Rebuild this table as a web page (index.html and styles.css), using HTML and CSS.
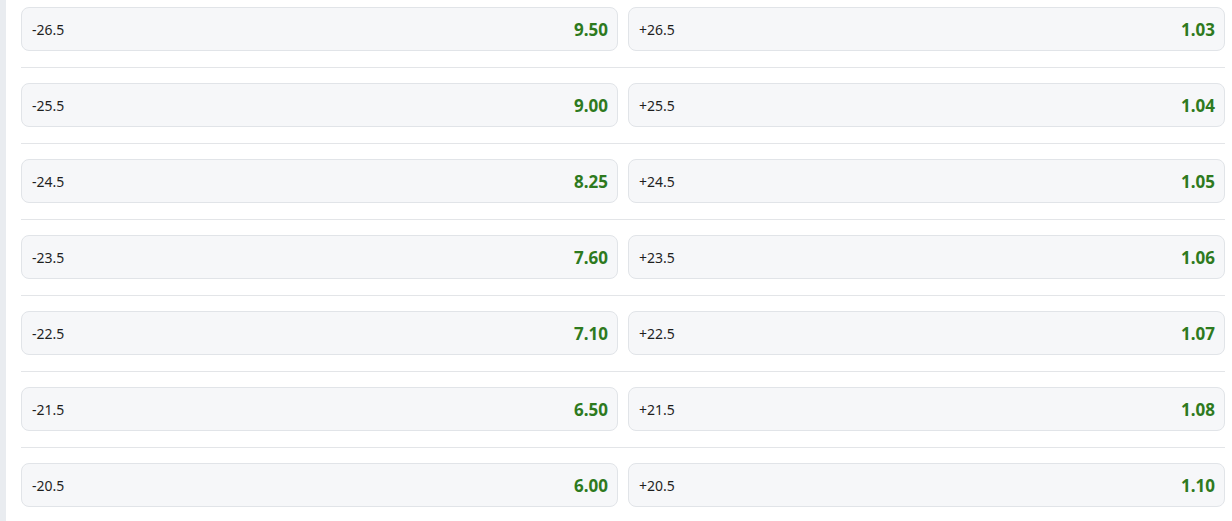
FILE: index.html
```html
<!DOCTYPE html>
<html>
<head>
<meta charset="utf-8">
<link rel="stylesheet" href="styles.css">
</head>
<body>
<div class="page">
  <div class="rail"></div>
  <div class="list">
    <div class="row"><div class="cell"><span class="label">-26.5</span><span class="odds">9.50</span></div><div class="cell"><span class="label">+26.5</span><span class="odds">1.03</span></div></div>
    <div class="row"><div class="cell"><span class="label">-25.5</span><span class="odds">9.00</span></div><div class="cell"><span class="label">+25.5</span><span class="odds">1.04</span></div></div>
    <div class="row"><div class="cell"><span class="label">-24.5</span><span class="odds">8.25</span></div><div class="cell"><span class="label">+24.5</span><span class="odds">1.05</span></div></div>
    <div class="row"><div class="cell"><span class="label">-23.5</span><span class="odds">7.60</span></div><div class="cell"><span class="label">+23.5</span><span class="odds">1.06</span></div></div>
    <div class="row"><div class="cell"><span class="label">-22.5</span><span class="odds">7.10</span></div><div class="cell"><span class="label">+22.5</span><span class="odds">1.07</span></div></div>
    <div class="row"><div class="cell"><span class="label">-21.5</span><span class="odds">6.50</span></div><div class="cell"><span class="label">+21.5</span><span class="odds">1.08</span></div></div>
    <div class="row"><div class="cell"><span class="label">-20.5</span><span class="odds">6.00</span></div><div class="cell"><span class="label">+20.5</span><span class="odds">1.10</span></div></div>
  </div>
</div>
</body>
</html>
```
FILE: styles.css
```css
html, body {
  margin: 0;
  padding: 0;
  background: #ffffff;
  height: 100%;
  overflow: hidden;
}
body {
  font-family: "Noto Sans", "Open Sans", "Liberation Sans", sans-serif;
}
.page {
  display: flex;
  height: 521px;
}
.rail {
  width: 6px;
  background: #e9ecf0;
  flex: none;
}
.list {
  flex: 1;
  padding: 7px 7px 0 15px;
  display: flex;
  flex-direction: column;
}
.row {
  display: grid;
  grid-template-columns: 1fr 1fr;
  gap: 10px;
  padding-bottom: 16px;
  border-bottom: 1px solid #e3e5e8;
  margin-bottom: 15px;
}
.row:last-child {
  border-bottom: none;
}
.cell {
  height: 42px;
  border: 1px solid #e1e4e8;
  border-radius: 8px;
  background: #f6f7f9;
  display: flex;
  align-items: center;
  justify-content: space-between;
  padding: 0 9px 0 10px;
}
.label {
  font-size: 14px;
  color: #1f1f1f;
}
.odds {
  font-size: 17px;
  font-weight: 700;
  color: #2e7a1e;
}
```
